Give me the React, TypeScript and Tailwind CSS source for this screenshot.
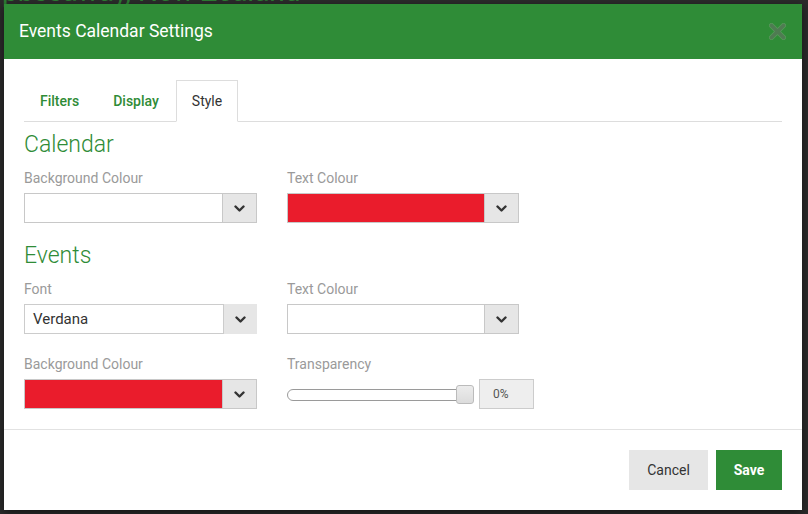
import React from 'react';

const Chevron: React.FC = () => (
  <svg width="11" height="7" viewBox="0 0 11 7">
    <path d="M1.5 1.5 5.5 5.5l4-4" fill="none" stroke="#333" strokeWidth="2.4" strokeLinecap="round" strokeLinejoin="round" />
  </svg>
);

const ColourSelect: React.FC<{ red?: boolean }> = ({ red }) => (
  <div className="flex h-[30px] border border-[#c8c8c8]">
    <div className={red ? 'flex-1 bg-[#ea1c2c]' : 'flex-1 bg-white'} />
    <div className="w-[34px] border-l border-[#c8c8c8] bg-[#e6e6e6] flex items-center justify-center">
      <Chevron />
    </div>
  </div>
);

const FontSelect: React.FC = () => (
  <div className="flex h-[30px]">
    <div className="flex-1 border border-[#ccc] bg-white px-[8px] flex items-center text-[15px] text-[#333]">Verdana</div>
    <div className="w-[33px] bg-[#e6e6e6] flex items-center justify-center">
      <Chevron />
    </div>
  </div>
);

const Field: React.FC<{ label: string; children: React.ReactNode }> = ({ label, children }) => (
  <div className="flex flex-col gap-[5px]">
    <div className="h-[20px] leading-[20px] text-[14px] text-[#9a9a9a]">{label}</div>
    {children}
  </div>
);

const Transparency: React.FC = () => (
  <div className="flex items-center h-[30px] gap-[5px] w-max">
    <div className="relative shrink-0 w-[187px] h-[19px]">
      <div className="absolute left-0 right-[9px] top-[4px] h-[12px] rounded-full border border-[#9a9a9a] bg-white" />
      <div className="absolute right-0 top-0 w-[18px] h-[19px] rounded-[3px] border border-[#bbb] bg-gradient-to-b from-[#ececec] to-[#dcdcdc]" />
    </div>
    <div className="shrink-0 w-[55px] h-[30px] border border-[#ccc] bg-[#eee] flex items-center pl-[13px] text-[12px] text-[#555]">0%</div>
  </div>
);

export default function App() {
  return (
    <div className="relative w-[808px] h-[514px] overflow-hidden bg-[#2b2b2b] p-[4px] font-['Roboto',sans-serif]">
      {/* page behind the overlay, only a sliver shows */}
      <span className="absolute left-[2px] top-[-24px] text-[28px] leading-[32px] text-[#2d7d33] whitespace-nowrap">pbssaway, New Zealand</span>
      <div className="relative w-[798px] h-[506px] bg-white flex flex-col shadow-[0_3px_9px_rgba(0,0,0,0.5)]">
        <div className="h-[55px] bg-[#2f8c37] flex items-center justify-between pl-[15px] pr-[16px]">
          <h1 className="text-[17.5px] text-white">Events Calendar Settings</h1>
          <svg width="17" height="17" viewBox="0 0 17 17">
            <path d="M2.5 2.5l12 12M14.5 2.5l-12 12" stroke="#7fa97f" strokeWidth="5" strokeLinecap="round" opacity="0.5" />
            <path d="M2.5 2.5l12 12M14.5 2.5l-12 12" stroke="#4f7b52" strokeWidth="3.6" strokeLinecap="round" />
          </svg>
        </div>

        <div className="px-[20px] pt-[21px] pb-[20px]">
          <div className="flex h-[42px] border-b border-[#ddd]">
            <div className="h-[42px] -mb-px mr-[2px] px-[16px] flex items-center text-[14px] font-medium text-[#2f8c37]">Filters</div>
            <div className="h-[42px] -mb-px mr-[1px] px-[16px] flex items-center text-[14px] font-medium text-[#2f8c37]">Display</div>
            <div className="h-[42px] -mb-px px-[15px] flex items-center border border-[#ddd] border-b-white bg-white text-[14px] text-[#333]">Style</div>
          </div>

          <h2 className="mt-[10px] h-[26px] leading-[26px] text-[23px] font-light text-[#2f8c37]">Calendar</h2>
          <div className="mt-[10px] grid grid-cols-[233px_232px] gap-x-[30px] gap-y-[20px]">
            <Field label="Background Colour"><ColourSelect /></Field>
            <Field label="Text Colour"><ColourSelect red /></Field>
          </div>

          <h2 className="mt-[20px] h-[26px] leading-[26px] text-[23px] font-light text-[#2f8c37]">Events</h2>
          <div className="mt-[10px] grid grid-cols-[233px_232px] gap-x-[30px] gap-y-[20px]">
            <Field label="Font"><FontSelect /></Field>
            <Field label="Text Colour"><ColourSelect /></Field>
            <Field label="Background Colour"><ColourSelect red /></Field>
            <Field label="Transparency"><Transparency /></Field>
          </div>
        </div>

        <div className="border-t border-[#e2e2e2] pt-[20px] pr-[20px] flex justify-end gap-[8px]">
          <button className="w-[79px] h-[40px] bg-[#e6e6e6] text-[14px] text-[#333]">Cancel</button>
          <button className="w-[66px] h-[40px] bg-[#2f8c37] text-[14px] font-bold text-white">Save</button>
        </div>
      </div>
    </div>
  );
}
